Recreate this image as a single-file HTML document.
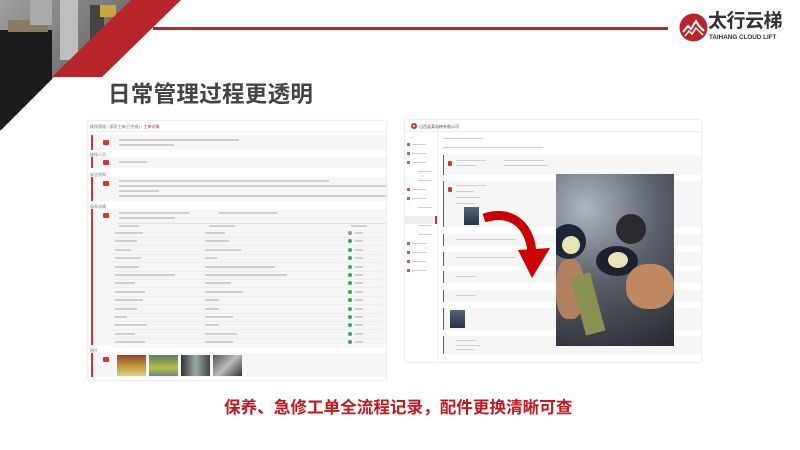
<!DOCTYPE html>
<html><head><meta charset="utf-8"><style>
*{margin:0;padding:0;box-sizing:border-box}
body{width:800px;height:450px;overflow:hidden;background:#fff;position:relative;font-family:"Liberation Sans","Noto Sans CJK SC",sans-serif}
.a{position:absolute}
.g{position:absolute;background:#cfcfcf;height:2px}
.t{position:absolute;font-size:4px;color:#777;white-space:nowrap;line-height:5px}
.card{position:absolute;background:#f6f6f6;border-left:2px solid #c33}
.ic{position:absolute;width:6px;height:5px;background:#d33;border-radius:1px}
.dot{position:absolute;width:4px;height:4px;border-radius:50%;background:#2bb24c}
</style></head><body>
<!-- top-left photo -->
<svg class="a" style="left:0;top:0" width="190" height="135">
<defs><linearGradient id="city" x1="0" y1="0" x2="1" y2="1"><stop offset="0" stop-color="#a0a0a0"/><stop offset="0.5" stop-color="#757575"/><stop offset="1" stop-color="#2b2b2b"/></linearGradient>
<clipPath id="tri"><polygon points="0,0 131,0 0,131"/></clipPath></defs>
<g clip-path="url(#tri)">
<rect width="131" height="131" fill="url(#city)"/>
<rect x="0" y="30" width="52" height="100" fill="#1c1c1c"/>
<rect x="8" y="20" width="40" height="12" fill="#8a7a60"/>
<rect x="60" y="0" width="18" height="60" fill="#bdbdbd"/>
<rect x="90" y="5" width="14" height="40" fill="#444"/>
<rect x="100" y="5" width="16" height="12" fill="#c8a640"/>
<rect x="30" y="0" width="22" height="25" fill="#aaa"/>
</g>
<polygon points="131,0 181,0 102,77 52,77" fill="#b8262b"/>
</svg>
<div class="a" style="left:153px;top:27px;width:515px;height:3px;background:#b8262b"></div>
<!-- logo -->
<svg class="a" style="left:679px;top:13px" width="30" height="30">
<circle cx="14.5" cy="14.5" r="14" fill="#b8262b"/>
<polyline points="4,19 9,13 12,16 17,8 20,13 25,18" fill="none" stroke="#fff" stroke-width="2"/>
<polyline points="6,23 10,18 13,21 17,15 24,22" fill="none" stroke="#fff" stroke-width="1.5"/>
</svg>
<div class="a" style="left:708px;top:11px;font-size:19px;font-weight:bold;color:#333;letter-spacing:-0.5px;line-height:22px">太行云梯</div>
<div class="a" style="left:709px;top:34px;font-size:6.3px;font-weight:bold;color:#333;white-space:nowrap">TAIHANG CLOUD LIFT</div>
<!-- title -->
<div class="a" style="left:108px;top:81px;font-size:22.5px;font-weight:bold;color:#444;letter-spacing:0.3px;line-height:28px">日常管理过程更透明</div>

<!-- left screenshot -->
<div class="a" style="left:88px;top:121px;width:298px;height:259px;background:#fff;box-shadow:0 0 2px #ccc;overflow:hidden">
 <div class="t" style="left:2px;top:3px">维保管理 / 保养工单(已完成) / <span style="color:#c33">工单详情</span></div>
 <div class="a" style="left:0;top:10px;width:298px;height:1px;background:#eee"></div>
 <div class="card" style="left:3px;top:14px;width:295px;height:15px"><div class="ic" style="left:10px;top:5px"></div><div class="g" style="left:26px;top:4px;width:120px"></div><div class="g" style="left:26px;top:9px;width:55px"></div></div>
 <div class="t" style="left:2px;top:31px">维保人员</div>
 <div class="card" style="left:3px;top:36px;width:295px;height:11px"><div class="ic" style="left:10px;top:3px"></div><div class="g" style="left:26px;top:4px;width:28px"></div></div>
 <div class="t" style="left:2px;top:51px">安全须知</div>
 <div class="card" style="left:3px;top:56px;width:295px;height:24px"><div class="ic" style="left:10px;top:4px"></div><div class="g" style="left:26px;top:3px;width:210px"></div><div class="g" style="left:26px;top:8px;width:269px"></div><div class="g" style="left:26px;top:13px;width:40px"></div><div class="g" style="left:26px;top:18px;width:269px"></div></div>
 <div class="t" style="left:2px;top:83px">保养详情</div>
 <div class="card" style="left:3px;top:88px;width:295px;height:136px">
  <div class="ic" style="left:10px;top:4px"></div>
  <div class="g" style="left:26px;top:3px;width:70px"></div><div class="g" style="left:126px;top:3px;width:58px"></div>
  <div class="g" style="left:26px;top:8px;width:56px"></div>
  <div class="a" style="left:24px;top:14px;width:271px;height:1px;background:#e2e2e2"></div>
  <div class="g" style="left:26px;top:16px;width:20px"></div><div class="g" style="left:116px;top:16px;width:26px"></div><div class="g" style="left:258px;top:16px;width:16px"></div>
 </div>
 <div class="t" style="left:2px;top:227px">图片</div>
 <div class="card" style="left:3px;top:232px;width:295px;height:24px"><div class="ic" style="left:10px;top:4px"></div>
  <div class="a" style="left:24px;top:2px;width:29px;height:21px;background:linear-gradient(#8a4a2a,#c9a040 60%,#d8d080)"></div>
  <div class="a" style="left:56px;top:2px;width:29px;height:21px;background:linear-gradient(#5a7a70,#b8c040 60%,#6a8a90)"></div>
  <div class="a" style="left:88px;top:2px;width:29px;height:21px;background:linear-gradient(90deg,#333,#9aa 50%,#444)"></div>
  <div class="a" style="left:120px;top:2px;width:29px;height:21px;background:linear-gradient(135deg,#555,#bbb 50%,#333)"></div>
 </div>
</div>
<div id="rows"></div>

<!-- right screenshot -->
<div class="a" style="left:405px;top:120px;width:296px;height:242px;background:#fff;box-shadow:0 0 2px #ccc;overflow:hidden">
 <div class="a" style="left:6px;top:3px;width:6px;height:6px;border:2px solid #c33;border-radius:50%"></div>
 <div class="t" style="left:14px;top:4px;color:#555">山西省某电梯有限公司</div>
 <div class="a" style="left:0;top:11px;width:296px;height:1px;background:#eee"></div>
 <div class="a" style="left:32px;top:12px;width:1px;height:230px;background:#eee"></div>
 <div id="side"></div>
 <div class="a" style="left:0;top:96px;width:32px;height:8px;background:#eee;border-right:2px solid #c33"></div>
 <div class="g" style="left:38px;top:18px;width:40px;height:1px"></div><div class="g" style="left:38px;top:27px;width:100px;height:1px"></div>
 <div class="card" style="left:38px;top:35px;width:258px;height:20px;border-left-width:1px"><div class="ic" style="left:4px;top:6px;width:4px"></div><div class="g" style="left:12px;top:5px;width:30px;height:1px"></div><div class="g" style="left:12px;top:10px;width:20px;height:1px"></div><div class="g" style="left:60px;top:5px;width:40px;height:1px"></div><div class="g" style="left:60px;top:10px;width:44px;height:1px"></div></div>
 <div class="card" style="left:38px;top:61px;width:258px;height:46px;border-left-width:1px"><div class="ic" style="left:4px;top:6px;width:4px"></div><div class="g" style="left:12px;top:4px;width:30px;height:1px"></div><div class="g" style="left:12px;top:10px;width:18px;height:1px"></div><div class="g" style="left:12px;top:16px;width:24px;height:1px"></div><div class="g" style="left:12px;top:22px;width:18px;height:1px"></div><div class="a" style="left:20px;top:26px;width:15px;height:18px;background:linear-gradient(#567,#234)"></div></div>
 <div class="card" style="left:38px;top:114px;width:258px;height:12px;border-left-width:1px"><div class="g" style="left:12px;top:5px;width:60px;height:1px"></div></div>
 <div class="card" style="left:38px;top:132px;width:258px;height:14px;border-left-width:1px"><div class="g" style="left:12px;top:5px;width:60px;height:1px"></div></div>
 <div class="card" style="left:38px;top:151px;width:258px;height:12px;border-left-width:1px"><div class="g" style="left:12px;top:5px;width:20px;height:1px"></div></div>
 <div class="card" style="left:38px;top:170px;width:258px;height:12px;border-left-width:1px"><div class="g" style="left:12px;top:5px;width:20px;height:1px"></div></div>
 <div class="card" style="left:38px;top:188px;width:258px;height:22px;border-left-width:1px"><div class="a" style="left:6px;top:2px;width:15px;height:18px;background:linear-gradient(#567,#234)"></div></div>
 <div class="card" style="left:38px;top:216px;width:258px;height:18px;border-left-width:1px"><div class="g" style="left:12px;top:4px;width:20px;height:1px"></div><div class="g" style="left:12px;top:9px;width:24px;height:1px"></div><div class="g" style="left:12px;top:13px;width:18px;height:1px"></div></div>
</div>
<!-- photo -->
<div class="a" style="left:556px;top:174px;width:118px;height:172px;background:radial-gradient(circle at 25% 20%,#b0b6c0,#5a606a 45%,#25282e);overflow:hidden">
 <div class="a" style="left:-5px;top:50px;width:35px;height:35px;border-radius:50%;background:#1d2638"></div>
 <div class="a" style="left:6px;top:62px;width:18px;height:18px;border-radius:50%;background:#e8e4b0"></div>
 <div class="a" style="left:60px;top:40px;width:30px;height:30px;border-radius:50%;background:#2a2a30"></div>
 <div class="a" style="left:40px;top:72px;width:42px;height:30px;border-radius:50%;background:#1e2030"></div>
 <div class="a" style="left:52px;top:78px;width:20px;height:16px;border-radius:50%;background:#e8e4b8"></div>
 <div class="a" style="left:0;top:85px;width:28px;height:60px;background:#b08060;border-radius:40%"></div>
 <div class="a" style="left:70px;top:90px;width:48px;height:45px;background:#c08860;border-radius:45%"></div>
 <div class="a" style="left:22px;top:100px;width:20px;height:60px;background:#8a9050;transform:rotate(-15deg)"></div>
</div>
<!-- arrow -->
<svg class="a" style="left:470px;top:200px" width="95" height="80">
<path d="M14,18 C45,8 62,30 62,56" fill="none" stroke="#c00" stroke-width="9"/>
<polygon points="48,50 80,48 62,78" fill="#c00"/>
</svg>
<!-- caption -->
<div class="a" style="left:224px;top:398px;font-size:16.6px;font-weight:bold;color:#c8161d;white-space:nowrap;line-height:20px">保养、急修工单全流程记录，配件更换清晰可查</div>
<script>
var h='';
var c=[[28,20],[22,24],[16,36],[26,12],[24,70],[60,82],[20,26],[30,38],[28,14],[22,14],[12,28],[32,14],[20,32],[30,28]];
for(var i=0;i<14;i++){var yy=232+i*8.4;
h+='<div class="g" style="left:115px;top:'+yy+'px;width:'+c[i][0]+'px"></div><div class="g" style="left:205px;top:'+yy+'px;width:'+c[i][1]+'px"></div><div class="dot" style="left:348px;top:'+(yy-1)+'px;'+(i==0?'background:#999':'')+'"></div><div class="g" style="left:355px;top:'+yy+'px;width:8px"></div><div class="a" style="left:113px;top:'+(yy+5)+'px;width:270px;height:1px;background:#eee"></div>';}
document.getElementById('rows').innerHTML=h;
var s='',ys=[15,24,33,42,51,60,69,78,87,96,105,114,123,132,141];
for(var j=0;j<ys.length;j++){var ind=(j==3||j==4||j==7||j==8||j==9||j==10)?8:2;
s+=(ind==2?'<div class="a" style="left:2px;top:'+(ys[j]+8)+'px;width:3px;height:3px;background:#d55"></div>':'')+'<div class="g" style="left:'+(ind+5)+'px;top:'+(ys[j]+9)+'px;width:14px;height:1px"></div>';}
document.getElementById('side').innerHTML=s;
</script>
</body></html>
